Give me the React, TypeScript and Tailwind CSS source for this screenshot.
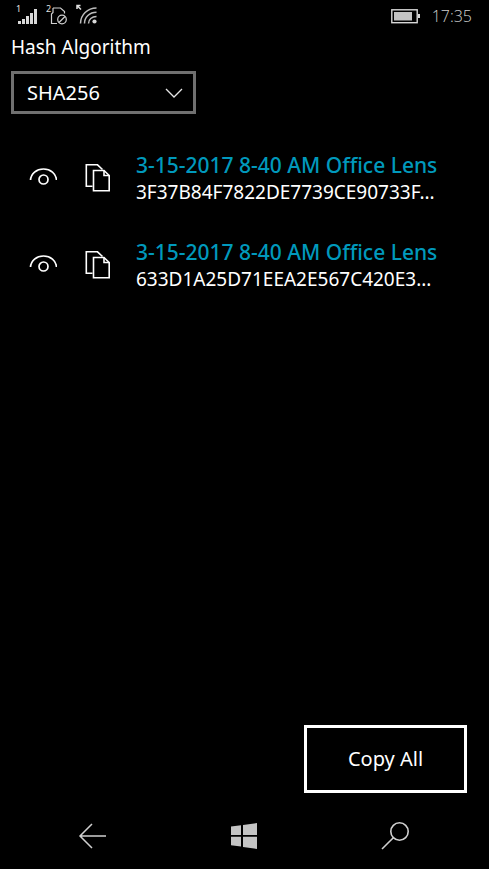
import React from "react";

const files = [
  { name: "3-15-2017 8-40 AM Office Lens", hash: "3F37B84F7822DE7739CE90733F..." },
  { name: "3-15-2017 8-40 AM Office Lens", hash: "633D1A25D71EEA2E567C420E3..." },
];

function SignalIcon() {
  return (
    <svg width="22" height="24" viewBox="0 0 22 24" aria-hidden="true">
      <text x="0" y="9" fontSize="9" fill="#e0e0e0">1</text>
      <g fill="#d8d8d8">
        <rect x="2" y="18" width="3" height="3" />
        <rect x="6" y="16" width="3" height="5" />
        <rect x="10" y="13" width="3" height="8" />
        <rect x="14" y="10" width="3" height="11" />
        <rect x="18" y="6" width="3" height="15" />
      </g>
    </svg>
  );
}

function SimIcon() {
  return (
    <svg width="22" height="24" viewBox="0 0 22 24" fill="none" stroke="#cfcfcf" strokeWidth="1.2" aria-hidden="true">
      <text x="0" y="9" fontSize="9" fill="#e0e0e0" stroke="none">2</text>
      <path d="M7 5 H14.5 L18.5 8.500 V10.500 M7 5 V9.5 L5.5 11 V20.5 H11" />
      <circle cx="16" cy="16.5" r="4.300" />
      <path d="M13 19.5 L19 13.500" />
    </svg>
  );
}

function WifiIcon() {
  return (
    <svg width="22" height="24" viewBox="0 0 22 24" fill="none" stroke="#bdbdbd" strokeWidth="1.5" aria-hidden="true">
      <path d="M1 6 V2.500 H4.500 M1 2.500 L5 6.500" stroke="#e0e0e0" />
      <path d="M4.500 20.500 C4.500 12 11.500 5 20.500 5" />
      <path d="M8.500 20.500 C8.500 14.300 13.500 9.300 20.500 9.300" />
      <path d="M12.500 20.500 C12.500 16.500 15.800 13.500 20.500 13.500" />
      <circle cx="18.5" cy="18.5" r="2.100" fill="#d8d8d8" stroke="none" />
    </svg>
  );
}

function BatteryIcon() {
  return (
    <svg width="29" height="15" viewBox="0 0 29 15" aria-hidden="true">
      <rect x="0.8" y="0.8" width="25.4" height="12.9" fill="none" stroke="#d8d8d8" strokeWidth="1.4" />
      <rect x="3" y="3" width="18" height="8.500" fill="#c4c4c4" />
      <rect x="27" y="5" width="2" height="4" fill="#d8d8d8" />
    </svg>
  );
}

function EyeIcon() {
  return (
    <svg width="28" height="20" viewBox="0 0 28 20" fill="none" stroke="#fff" strokeWidth="1.7" aria-hidden="true">
      <path d="M1.500 12 C2 5.500 7.500 1 14.500 1 C21.500 1 27 5.500 27.500 12" />
      <circle cx="14.500" cy="11.500" r="4.500" />
    </svg>
  );
}

function CopyIcon() {
  return (
    <svg width="26" height="28" viewBox="0 0 26 28" fill="none" stroke="#fff" strokeWidth="1.600" aria-hidden="true">
      <path d="M7.500 22.200 H1.300 V0.800 H12.500 L17.500 5.500" />
      <path d="M8.500 6.500 H19 L24.200 11.500 V26.800 H8.500 Z" />
      <path d="M19 6.500 V11.500 H24.200" />
    </svg>
  );
}

export default function App() {
  return (
    <div className="flex min-h-screen flex-col bg-black font-['Noto_Sans','Open_Sans',sans-serif] text-white">
      <header className="flex h-8 items-center justify-between pr-[17px] pl-4 text-[#d0d0d0]">
        <div className="flex gap-2 pb-0.5">
          <SignalIcon />
          <SimIcon />
          <WifiIcon />
        </div>
        <div className="flex items-center gap-3">
          <BatteryIcon />
          <time className="font-['Open_Sans',sans-serif] text-base font-light">17:35</time>
        </div>
      </header>

      <main className="flex flex-1 flex-col">
        <div className="flex flex-col items-start gap-2 pl-[11px]">
          <label htmlFor="algorithm" className="text-[19px] leading-[31px]">
            Hash Algorithm
          </label>
          <div className="grid w-[185px] items-center">
            <select
              id="algorithm"
              className="col-start-1 row-start-1 h-[43px] w-full appearance-none rounded-none border-3 border-[#707070] bg-black pl-[13px] text-xl"
            >
              <option>SHA256</option>
            </select>
            <svg
              width="18"
              height="10"
              viewBox="0 0 18 10"
              fill="none"
              stroke="#e6e6e6"
              strokeWidth="1.300"
              className="pointer-events-none col-start-1 row-start-1 mr-[13px] justify-self-end"
              aria-hidden="true"
            >
              <path d="M1 1 L9 9 L17 1" />
            </svg>
          </div>
        </div>

        <ul className="mt-9 flex flex-col gap-[31px] pr-4 pl-[29px]">
          {files.map((file) => (
            <li key={file.hash} className="flex h-14 items-center">
              <button type="button" aria-label="Show hash" className="shrink-0">
                <EyeIcon />
              </button>
              <button type="button" aria-label="Copy hash" className="ml-7 shrink-0">
                <CopyIcon />
              </button>
              <div className="ml-[25px] whitespace-nowrap">
                <h2 className="text-[21px] leading-7 font-medium text-[#0099bc]">{file.name}</h2>
                <p className="text-[19px] leading-[27px]">{file.hash}</p>
              </div>
            </li>
          ))}
        </ul>

        <button
          type="button"
          className="mt-auto mr-[22px] mb-[10px] h-[68px] w-[163px] self-end border-3 border-white text-xl"
        >
          Copy All
        </button>
      </main>

      <nav className="grid h-[66px] grid-cols-[1fr_auto_1fr] items-center pr-20 pl-[78px]">
        <button type="button" aria-label="Back" className="justify-self-start">
          <svg width="28" height="26" viewBox="0 0 28 26" fill="none" stroke="#d0d0d0" strokeWidth="1.500" aria-hidden="true">
            <path d="M28 13 H2 M14 1 L2 13 L14 25" />
          </svg>
        </button>
        <button type="button" aria-label="Start">
          <svg width="26" height="26" viewBox="0 0 26 26" fill="#c4c4c4" aria-hidden="true">
            <path d="M0 3.600 L10 2.200 V12 H0 Z M12 1.900 L26 0 V12 H12 Z M0 13.800 H10 V23.600 L0 22.200 Z M12 13.800 H26 V26 L12 23.900 Z" />
          </svg>
        </button>
        <button type="button" aria-label="Search" className="justify-self-end">
          <svg width="28" height="28" viewBox="0 0 28 28" fill="none" stroke="#d0d0d0" strokeWidth="1.600" aria-hidden="true">
            <circle cx="18.500" cy="9.500" r="8.700" />
            <path d="M12.300 15.700 L1 27" />
          </svg>
        </button>
      </nav>
    </div>
  );
}
